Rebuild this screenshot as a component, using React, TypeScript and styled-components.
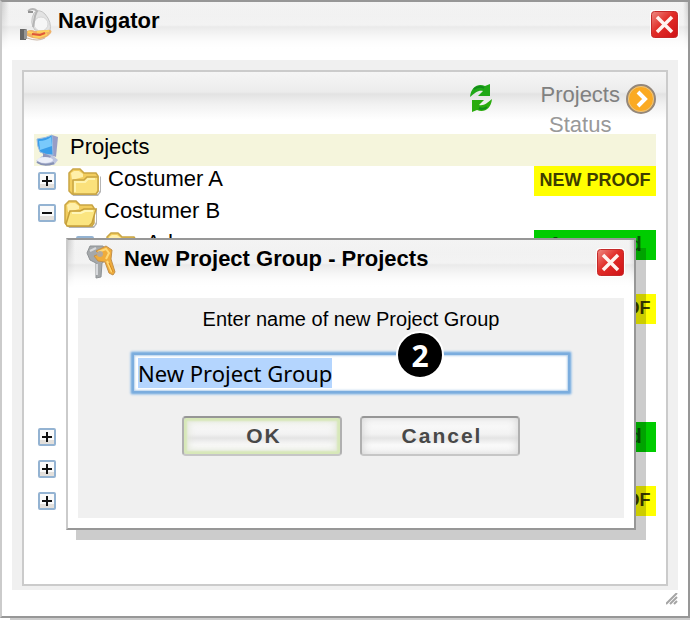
import React, { useEffect, useId, useRef } from "react";
import styled, { createGlobalStyle } from "styled-components";

const GlobalStyle = createGlobalStyle`
  * { box-sizing: border-box; }
  body {
    margin: 0;
    background: #fff;
    color: #000;
    font-family: "Liberation Sans", Arial, sans-serif;
    font-size: 22px;
    line-height: 26px;
  }
`;

const Page = styled.main`
  position: relative;
  min-height: 100vh;
  overflow: hidden;
`;

const WindowFrame = styled.section`
  background: #fff;
  border: 2px solid #979797;
  border-left-color: #cbcbcb;
  box-shadow: 10px 10px 0 rgba(0, 0, 0, 0.2);
`;

const DialogFrame = styled(WindowFrame)`
  position: absolute;
  top: 238px;
  left: 66px;
  right: 54px;
  padding-bottom: 10px;
`;

const TitleBar = styled.header`
  display: flex;
  align-items: flex-start;
  height: 58px;
  padding: 4px 9px 0 18px;
  background:
    linear-gradient(#fff0, #fff 48px),
    linear-gradient(90deg, rgba(140, 140, 140, 0.35), transparent 7px) 0 0 / 100% 48px no-repeat,
    linear-gradient(270deg, rgba(140, 140, 140, 0.35), transparent 5px) 0 0 / 100% 48px no-repeat,
    linear-gradient(#f4f4f4, #e8e8e8 23px, #d3d3d3 25px, #dedede 32px, #fff 48px);
`;

const Title = styled.h1`
  flex: 1;
  margin: 2px 0 0 6px;
  font-size: 22px;
  line-height: 26px;
  font-weight: bold;
`;

const CloseButton = styled.button`
  display: flex;
  margin: 4px 0 0;
  padding: 0;
  border: 0;
  background: none;
`;

const Panel = styled.div`
  margin: 0 10px;
  padding: 10px 10px 4px;
  background: #f0f0f0;
`;

const Content = styled.div`
  padding: 0 10px 66px;
  background: #fff;
  border: 2px solid #cbcbcb;
`;

const ListHeader = styled.div`
  display: flex;
  align-items: flex-start;
  justify-content: flex-end;
  height: 62px;
  margin: 0 -10px;
  padding: 10px 10px 0;
  background: linear-gradient(#f5f5f5, #ececec 20px, #e3e3e3 22px, #f1f1f1 32px, #fff 48px);
`;

const IconButton = styled.button`
  display: flex;
  padding: 0;
  border: 0;
  background: none;
`;

const RefreshButton = styled(IconButton)`
  margin: 2px 48px 0 0;
`;

const NextButton = styled(IconButton)`
  margin: 2px 0 0 6px;
`;

const HeaderLabels = styled.div`
  display: grid;
  gap: 4px;
  justify-items: center;
  color: #808080;
`;

const Muted = styled.span`
  color: #999;
`;

const Tree = styled.ul`
  margin: 0;
  padding: 0;
  list-style: none;
`;

const Row = styled.li<{ $selected?: boolean; $level?: number }>`
  display: flex;
  align-items: flex-start;
  height: 32px;
  padding-left: ${(p) => (p.$level ?? 0) * 38}px;
  background: ${(p) => (p.$selected ? "#f5f5dc" : "transparent")};
`;

const RowLabel = styled.span`
  flex: 1;
  margin-left: 6px;
`;

const RootLabel = styled(RowLabel)`
  margin-left: 8px;
`;

const Toggle = styled.button`
  display: flex;
  width: 18px;
  margin: 6px 8px 0 4px;
  padding: 0;
  border: 0;
  background: none;
`;

const FolderSlot = styled.span<{ $open?: boolean }>`
  display: flex;
  margin-top: 2px;
  margin-left: ${(p) => (p.$open ? 0 : 4)}px;
`;

const Tag = styled.span<{ $kind: "proof" | "approved" }>`
  width: 122px;
  height: 30px;
  margin-left: auto;
  line-height: 29px;
  font-weight: bold;
  text-align: center;
  font-size: ${(p) => (p.$kind === "proof" ? 18 : 20)}px;
  color: ${(p) => (p.$kind === "proof" ? "#3d3d00" : "#065806")};
  background: ${(p) => (p.$kind === "proof" ? "#ffff00" : "#00cc00")};
`;

const ResizeBar = styled.footer`
  display: flex;
  justify-content: flex-end;
  height: 26px;
  padding: 3px 10px 0 0;
`;

const DialogBody = styled.form`
  display: flex;
  flex-direction: column;
  align-items: center;
  height: 220px;
  margin: 0 10px;
  padding-top: 8px;
  background: #f0f0f0;
`;

const FieldLabel = styled.label`
  font-size: 20px;
  line-height: 26px;
`;

const FieldWrap = styled.div`
  position: relative;
  align-self: stretch;
  margin: 21px 54px 0 54px;
`;

const NameInput = styled.input`
  display: block;
  width: 100%;
  height: 40px;
  padding: 0 4px;
  border: 2px solid #7badde;
  border-radius: 1px;
  outline: 0;
  background: #fff;
  color: #000;
  font-family: "Noto Sans", "Open Sans", sans-serif;
  font-size: 22px;
  line-height: 26px;
  box-shadow: 0 0 0 1px #8fbae3, 0 0 2px 2px #a9caea, inset 0 0 2px 1px #b5d1ec;

  &::selection {
    background: #b4d5fe;
    color: #000;
  }
`;

const StepBadge = styled.span`
  position: absolute;
  top: -22px;
  left: 264px;
  width: 48px;
  height: 48px;
  border: 2px solid #fff;
  border-radius: 50%;
  background: #000;
  color: #fff;
  font-family: "Noto Sans", sans-serif;
  font-size: 30px;
  font-weight: bold;
  line-height: 46px;
  text-align: center;
`;

const Actions = styled.div`
  display: flex;
  gap: 18px;
  margin-top: 23px;
`;

const ActionButton = styled.button<{ $primary?: boolean }>`
  width: 160px;
  height: 40px;
  padding: 0 0 0 4px;
  border: 2px solid;
  border-color: #969696 #b0b0b0 #c6c6c6;
  border-radius: 4px;
  background: linear-gradient(#fff, #f2f2f2 16px, #e4e4e4 20px, #fafafa 27px, #fff);
  box-shadow: ${(p) =>
    p.$primary
      ? "inset 0 0 2px 3px #d7e8b8, inset 0 0 7px 5px #e4e8dc"
      : "inset 0 0 9px 1px #d6d6d6"};
  color: #484848;
  font-family: "Liberation Sans", Arial, sans-serif;
  font-size: 21px;
  font-weight: bold;
  letter-spacing: 2px;
`;

const CloseIcon = () => {
  const id = useId();
  return (
    <svg width="29" height="29" viewBox="0 0 29 29" aria-hidden="true">
      <defs>
        <linearGradient id={id} x1="0" y1="0" x2="1" y2="1">
          <stop offset="0" stopColor="#ee8a82" />
          <stop offset=".45" stopColor="#e12d28" />
          <stop offset="1" stopColor="#cf1116" />
        </linearGradient>
      </defs>
      <rect width="29" height="29" rx="4" fill="#fff" />
      <rect x="1.5" y="1.5" width="26" height="26" rx="3" fill={`url(#${id})`} stroke="#c52a2a" />
      <path d="M7 7l15 15M22 7L7 22" stroke="#fff3ef" strokeWidth="3.5" />
    </svg>
  );
};

const NavigatorIcon = () => (
  <svg width="32" height="36" viewBox="0 0 32 36" aria-hidden="true">
    <path d="M14 7q5-5 11 1 7 8 5 17l-15-1q-6-7-1-17z" fill="#e3e3e3" stroke="#c4c4c4" />
    <circle cx="21" cy="18" r="7" fill="#f6f6f6" stroke="#d6d6d6" />
    <path d="M8 5q5-4 9 0l-2 5-2 11" fill="none" stroke="#b5b5b5" strokeWidth="2" />
    <path d="M8 6h5" stroke="#929292" strokeWidth="2" />
    <path d="M0 23h6v11H0z" fill="#666" />
    <path d="M4 24l3-1v10H4z" fill="#969696" />
    <path d="M7 25q4-2 8 0l12-1q6-1 4 3-5 6-12 6-6 0-12-3z" fill="#efb26a" />
    <path d="M8 26l5 1M17 26l12-1M13 30l6 1 8-3" fill="none" stroke="#ffd35c" strokeWidth="2" />
    <path d="M12 28l8 1 5-2" fill="none" stroke="#df5838" strokeWidth="2" />
    <path d="M7 32q11 4 18 0" fill="none" stroke="#cbb6a4" />
  </svg>
);

const KeysIcon = () => (
  <svg width="32" height="36" viewBox="0 0 32 36" aria-hidden="true">
    <path d="M4 2h13l4 6-2 9-3 2-1 14-5 1V19l-6-3-3-7z" fill="#a5a8aa" stroke="#8e9295" />
    <path d="M4 7l6-3M11 20v11" fill="none" stroke="#d7d9dc" strokeWidth="2" />
    <path d="M10 7l10-5 6 4-1 9 4 13-2 3-4-2-4-11-7-1-4-5 5-2z" fill="#efac3b" stroke="#c3904a" />
    <path d="M12 8l8-3 3 4-3 6M21 17l5 11" fill="none" stroke="#ffd876" strokeWidth="2" />
    <circle cx="14" cy="10" r="3" fill="#b3a99c" />
    <path d="M23 19l4 9" stroke="#d48620" />
  </svg>
);

const RefreshIcon = () => (
  <svg width="24" height="28" viewBox="0 0 24 28" aria-hidden="true">
    <path d="M1 13C2 3 9-1 16 2l5-2v12H9l5-5C9 6 6 9 1 13z" fill="#20a817" />
    <path d="M23 15c-1 10-8 14-15 11l-5 2V16h12l-5 5c5 1 8-2 13-6z" fill="#2bac0e" />
    <path d="M5 5q5-4 10-1M18 23q-4 3-8 1" fill="none" stroke="#128c1b" strokeWidth="2" />
  </svg>
);

const NextIcon = () => (
  <svg width="30" height="30" viewBox="0 0 30 30" aria-hidden="true">
    <circle cx="15" cy="15" r="14" fill="#fbaa22" stroke="#94877a" strokeWidth="2" />
    <circle cx="15" cy="15" r="12.5" fill="none" stroke="#e5c58c" />
    <path d="M12 8l7 7-7 7" fill="none" stroke="#fff" strokeWidth="4" />
  </svg>
);

const ComputerIcon = () => (
  <svg width="28" height="32" viewBox="0 0 28 32" aria-hidden="true">
    <path d="M8 22l10-1 6 5-4 5H8l-6-4z" fill="#bec5df" />
    <path d="M18 1l6 2-2 20-5-2z" fill="#979dc6" />
    <path d="M3 5Q12 4 18 1l1 20q-8 0-13-3Q3 12 3 5z" fill="#399de9" stroke="#9bbbe0" />
    <path d="M5 7q7 0 12-4l1 9L6 16z" fill="#79c9fb" />
    <path d="M9 19l8 3-3 5-5-1z" fill="#8e97bd" />
    <ellipse cx="11" cy="26" rx="8" ry="3" fill="#eceff9" />
    <path d="M3 28q7 5 17 1" fill="none" stroke="#8792b3" strokeWidth="2" />
  </svg>
);

const ToggleIcon = ({ open }: { open?: boolean }) => (
  <svg width="18" height="18" viewBox="0 0 18 18" aria-hidden="true">
    <rect x="1" y="1" width="16" height="16" rx="1" fill="#fafafa" stroke="#94b3d2" strokeWidth="2" />
    <path d="M2 12h14v4H2z" fill="#e3e0dc" />
    <path d={open ? "M4 9h10" : "M4 9h10M9 4v10"} stroke="#111" strokeWidth="2" />
  </svg>
);

const FolderIcon = ({ open }: { open?: boolean }) => (
  <svg width="34" height="29" viewBox="0 0 34 29" aria-hidden="true">
    <path d="M4 26h26l2-4V8l1 1v15l-3 4H5z" fill="#b5b5b5" />
    <path d="M1 5l4-4h7l4 4h12l2 3v15l-2 3H4l-3-3z" fill="#f2cd5e" stroke="#c9a544" strokeWidth="1.5" />
    <path d="M3 5l3-2h5l4 3v3l-11 3z" fill="#fff0a9" />
    {open ? (
      <>
        <path d="M6 11h10l4-2h12l-4 14-3 3H3l-1-2z" fill="#fbe580" stroke="#c6a03b" strokeWidth="1.5" />
        <path d="M8 13h9l4-2h8" fill="none" stroke="#fff6b8" strokeWidth="2" />
      </>
    ) : (
      <>
        <path d="M5 12h11l3-3h11v14l-2 3H5z" fill="#fbe17b" stroke="#c9a544" strokeWidth="1.5" />
        <path d="M7 24V14h10l3-3h7" fill="none" stroke="#fff3ae" strokeWidth="2" />
      </>
    )}
  </svg>
);

const ResizeIcon = () => (
  <svg width="12" height="12" viewBox="0 0 12 12" aria-hidden="true">
    <path d="M0 11L11 0M4 11l7-7M8 11l3-3" stroke="#a5a5a5" strokeWidth="2" />
  </svg>
);

type Item = {
  name?: string;
  open?: boolean;
  level?: number;
  toggle?: boolean;
  tag?: "proof" | "approved";
};

const items: Item[] = [
  { name: "Costumer A", toggle: true, tag: "proof" },
  { name: "Costumer B", toggle: true, open: true },
  { name: "Ad", toggle: true, level: 1, tag: "approved" },
  {},
  { tag: "proof" },
  {},
  {},
  {},
  { toggle: true, tag: "approved" },
  { toggle: true },
  { toggle: true, tag: "proof" },
];

const tagText = { proof: "NEW PROOF", approved: "Approved" };

const TreeItem = ({ item }: { item: Item }) => (
  <Row $level={item.level}>
    {item.toggle && (
      <Toggle type="button" aria-label={item.open ? "Collapse" : "Expand"}>
        <ToggleIcon open={item.open} />
      </Toggle>
    )}
    {item.name && (
      <>
        <FolderSlot $open={item.open}>
          <FolderIcon open={item.open} />
        </FolderSlot>
        <RowLabel>{item.name}</RowLabel>
      </>
    )}
    {item.tag && <Tag $kind={item.tag}>{tagText[item.tag]}</Tag>}
  </Row>
);

export default function App() {
  const inputRef = useRef<HTMLInputElement>(null);

  useEffect(() => {
    inputRef.current?.focus();
    inputRef.current?.select();
  }, []);

  return (
    <Page>
      <GlobalStyle />
      <WindowFrame aria-label="Navigator">
        <TitleBar>
          <NavigatorIcon />
          <Title>Navigator</Title>
          <CloseButton type="button" aria-label="Close navigator">
            <CloseIcon />
          </CloseButton>
        </TitleBar>
        <Panel>
          <Content>
            <ListHeader>
              <RefreshButton type="button" aria-label="Refresh">
                <RefreshIcon />
              </RefreshButton>
              <HeaderLabels>
                <span>Projects</span>
                <Muted>Status</Muted>
              </HeaderLabels>
              <NextButton type="button" aria-label="Next">
                <NextIcon />
              </NextButton>
            </ListHeader>
            <Tree>
              <Row $selected>
                <ComputerIcon />
                <RootLabel>Projects</RootLabel>
              </Row>
              {items.map((item, index) => (
                <TreeItem key={index} item={item} />
              ))}
            </Tree>
          </Content>
        </Panel>
        <ResizeBar>
          <ResizeIcon />
        </ResizeBar>
      </WindowFrame>

      <DialogFrame role="dialog" aria-labelledby="dialog-title">
        <TitleBar>
          <KeysIcon />
          <Title as="h2" id="dialog-title">New Project Group - Projects</Title>
          <CloseButton type="button" aria-label="Close dialog">
            <CloseIcon />
          </CloseButton>
        </TitleBar>
        <DialogBody onSubmit={(event) => event.preventDefault()}>
          <FieldLabel htmlFor="group-name">Enter name of new Project Group</FieldLabel>
          <FieldWrap>
            <NameInput id="group-name" ref={inputRef} type="text" defaultValue="New Project Group" />
            <StepBadge>2</StepBadge>
          </FieldWrap>
          <Actions>
            <ActionButton type="submit" $primary>OK</ActionButton>
            <ActionButton type="button">Cancel</ActionButton>
          </Actions>
        </DialogBody>
      </DialogFrame>
    </Page>
  );
}
